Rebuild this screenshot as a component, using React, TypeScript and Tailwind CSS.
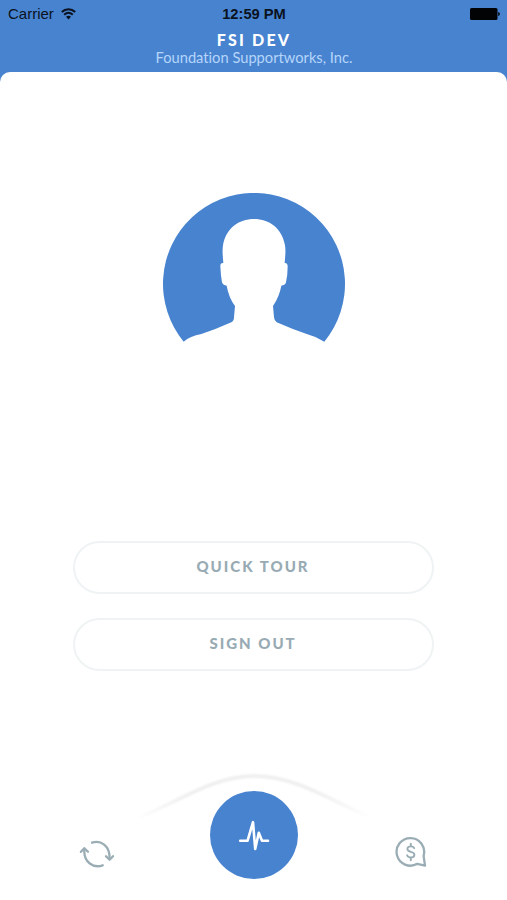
import React from 'react';

const WifiIcon = () => (
  <svg className="h-[12px] w-[15px]" viewBox="0 0 15 12" fill="none" stroke="#0a1220" strokeWidth="2">
    <path d="M0.8 4C4.6 0.2 10.4 0.2 14.2 4" />
    <path d="M3.2 6.8C5.8 4.3 9.2 4.3 11.8 6.8" />
    <path d="M7.5 11.4L5 8.7C6.5 7.3 8.5 7.3 10 8.7Z" fill="#0a1220" stroke="none" />
  </svg>
);

const BatteryIcon = () => (
  <svg className="h-[12px] w-[30px]" viewBox="0 0 30 12" fill="#020305">
    <rect width="27.5" height="12" rx="1.5" />
    <path d="M28.2 4C30.3 4.6 30.3 7.4 28.2 8Z" />
  </svg>
);

const Avatar = () => (
  <svg className="h-[150px] w-[182px]" viewBox="39 39 546 450" fill="#4883d0">
    <path d="M101 485A273 273 0 1 1 523 485Q500 470 470 462Q425 447 380 427Q373 423 372 412L369 378Q388 350 394 317Q405 317 408 307Q413 285 413 258Q412 248 404 249C405 234 408 215 405 196C396 145 358 117 312 117C266 117 228 145 219 196C216 215 219 234 220 249Q211 248 211 258Q212 285 216 307Q220 317 230 317Q236 352 255 378L252 412Q252 423 244 427Q198 448 154 462Q120 468 101 485Z" />
  </svg>
);

const SyncIcon = () => (
  <svg className="h-[30px] w-[36px]" viewBox="0 0 36 30" fill="none" stroke="#9aadb5" strokeWidth="2.3" strokeLinecap="round" strokeLinejoin="round">
    <path d="M13 3.7C21.5 0.8 31 6.5 30.6 19.5" />
    <path d="M27 17.2L30.6 20.8L34 17.2" />
    <path d="M23.7 26.3C14.5 29.5 4.6 23.5 5.3 10.5" />
    <path d="M1.9 12.8L5.3 9.2L9 12.8" />
  </svg>
);

const MoneyChatIcon = () => (
  <svg className="h-[32px] w-[32px]" viewBox="0 0 32 32" fill="none" stroke="#9aadb5" strokeWidth="2.3" strokeLinecap="round" strokeLinejoin="round">
    <path d="M22.3 27.8A13.8 13.8 0 1 1 28.6 19.8L30 29.6Z" />
    <path d="M19.2 12.2C18.6 10.9 17.5 10.4 15.8 10.4C13.8 10.4 12.4 11.4 12.4 13C12.4 16.9 19.4 14.8 19.4 18.7C19.4 20.4 17.9 21.5 15.8 21.5C13.9 21.5 12.6 20.7 12.1 19.3M15.8 7.6V10M15.8 22V24.2" strokeWidth="1.9" />
  </svg>
);

const PulseIcon = () => (
  <svg className="h-[32px] w-[32px]" viewBox="0 0 32 32" fill="none" stroke="white" strokeWidth="2.6" strokeLinecap="round" strokeLinejoin="round">
    <path d="M2.2 21.7H9.6L15 3.2L17.2 30L20.8 13.7L24 21.7H30" />
  </svg>
);

const NavArc = () => (
  <svg className="absolute left-[132px] top-0 h-[50px] w-[240px]" viewBox="0 0 240 50" fill="none">
    <defs>
      <linearGradient id="arcFade" x1="0" x2="240" y1="0" y2="0" gradientUnits="userSpaceOnUse">
        <stop offset="0.02" stopColor="#f1f1f1" stopOpacity="0" />
        <stop offset="0.25" stopColor="#f1f1f1" />
        <stop offset="0.75" stopColor="#f1f1f1" />
        <stop offset="0.99" stopColor="#f1f1f1" stopOpacity="0" />
      </linearGradient>
    </defs>
    <path d="M5 47C45 32 80 5 122 5C164 5 199 30 238 46" stroke="url(#arcFade)" strokeWidth="6" opacity="0.4" />
    <path d="M5 47C45 32 80 5 122 5C164 5 199 30 238 46" stroke="url(#arcFade)" strokeWidth="3" />
  </svg>
);

const actions = ['QUICK TOUR', 'SIGN OUT'];

const App: React.FC = () => {
  return (
    <div className="flex h-[900px] w-[507px] flex-col overflow-hidden bg-[#4883d0] font-['Lato',sans-serif]">
      {/* Header */}
      <header className="h-[72px] shrink-0">
        <div className="grid h-[28px] grid-cols-3 items-center pl-[8px] pr-[7px] font-['Liberation_Sans',sans-serif] text-[15px] leading-[28px] text-[#0a1220]">
          <div className="flex items-center gap-[7px]">
            <span>Carrier</span>
            <WifiIcon />
          </div>
          <span className="whitespace-nowrap text-center font-bold text-[14.7px]">12:59 PM</span>
          <div className="flex justify-end">
            <BatteryIcon />
          </div>
        </div>
        <h1 className="mt-[3px] pl-px text-center text-[16px] font-black leading-[18px] tracking-[2.2px] text-white">FSI DEV</h1>
        <p className="pl-px text-center text-[14.7px] leading-[16px] text-[#b5d5fa] [font-variant-ligatures:none]">Foundation Supportworks, Inc.</p>
      </header>

      <main className="flex flex-1 flex-col items-center rounded-t-[10px] bg-white">
        <div className="mt-[121px]">
          <Avatar />
        </div>

        <div className="mt-[198px] flex flex-col gap-[24px]">
          {actions.map((label) => (
            <button
              key={label}
              className="h-[53px] w-[361px] rounded-full border-2 border-[#eff3f4] pb-[2px] pr-px text-[15px] font-black tracking-[2px] text-[#98abb4]"
            >
              {label}
            </button>
          ))}
        </div>

        {/* Bottom navigation */}
        <nav className="relative mt-auto flex h-[129px] w-full items-start">
          <NavArc />
          <button className="ml-[79px] mt-[68px]">
            <SyncIcon />
          </button>
          <button className="relative ml-[95px] mt-[20px] flex h-[88px] w-[88px] items-center justify-center rounded-full bg-[#4883d0]">
            <PulseIcon />
          </button>
          <button className="ml-[97px] mt-[65px]">
            <MoneyChatIcon />
          </button>
        </nav>
      </main>
    </div>
  );
};

export default App;
